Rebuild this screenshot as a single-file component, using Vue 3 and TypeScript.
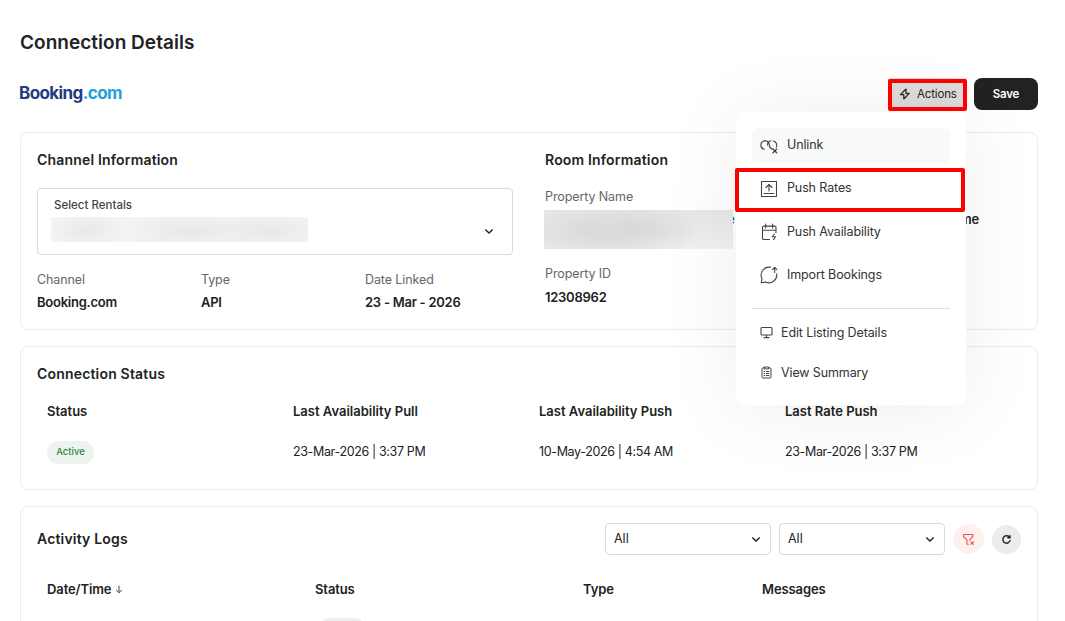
<script setup lang="ts">
interface StatusColumn {
  label: string
  value: string
  pill?: boolean
}

const channelFacts = [
  { label: 'Channel', value: 'Booking.com' },
  { label: 'Type', value: 'API' },
  { label: 'Date Linked', value: '23 - Mar - 2026' },
]

const statusColumns: StatusColumn[] = [
  { label: 'Status', value: 'Active', pill: true },
  { label: 'Last Availability Pull', value: '23-Mar-2026 | 3:37 PM' },
  { label: 'Last Availability Push', value: '10-May-2026 | 4:54 AM' },
  { label: 'Last Rate Push', value: '23-Mar-2026 | 3:37 PM' },
]
</script>

<template>
  <main class="page">
    <h1>Connection Details</h1>

    <header class="toolbar">
      <div class="logo">Booking<span>.com</span></div>
      <div class="buttons">
        <button class="actions">
          <svg width="12" height="14" viewBox="0 0 12 14" fill="none" stroke="#222" stroke-width="1.2" stroke-linejoin="round">
            <path d="M7 2 1.500 7.600h3.300v4.400l5.400-5.600H7z" />
          </svg>
          <span>Actions</span>
        </button>
        <button class="save">Save</button>
      </div>
    </header>

    <section class="card info">
      <div class="channel">
        <h2>Channel Information</h2>
        <div class="rental">
          <div>
            <div class="rental-label">Select Rentals</div>
            <div class="rental-value"></div>
          </div>
          <svg class="chev" width="10" height="7" viewBox="0 0 10 7"><path d="M1.3 1.4 5 5l3.7-3.6" /></svg>
        </div>
        <div class="facts">
          <div v-for="f in channelFacts" :key="f.label">
            <div class="label">{{ f.label }}</div>
            <div class="value">{{ f.value }}</div>
          </div>
        </div>
      </div>
      <div class="room">
        <h2>Room Information</h2>
        <div class="label name-label">Property Name</div>
        <div class="name-row">
          <div class="name-value"></div>
          <span class="link-tail">e</span>
          <span class="value room-tail">me</span>
        </div>
        <div class="label">Property ID</div>
        <div class="value id-value">12308962</div>
      </div>
    </section>

    <section class="card status">
      <h2>Connection Status</h2>
      <div class="status-grid">
        <div v-for="c in statusColumns" :key="c.label">
          <div class="th">{{ c.label }}</div>
          <div v-if="c.pill" class="pill">{{ c.value }}</div>
          <div v-else class="td">{{ c.value }}</div>
        </div>
      </div>
    </section>

    <section class="card logs">
      <div class="logs-head">
        <h2>Activity Logs</h2>
        <div class="filters">
          <div v-for="n in 2" :key="n" class="select">
            <span>All</span>
            <svg class="chev" width="10" height="7" viewBox="0 0 10 7"><path d="M1.3 1.4 5 5l3.7-3.6" /></svg>
          </div>
          <div class="round clear">
            <svg width="13" height="13" viewBox="0 0 13 13" fill="none" stroke="#f0524f" stroke-width="1.1" stroke-linejoin="round">
              <path d="M6.800 11.300H4.900V6.800L1.500 3.500V1.500h9.300v2L7.700 6.600v1.200M8.500 8.500l3.200 3.200M11.700 8.500l-3.200 3.200" />
            </svg>
          </div>
          <div class="round refresh">
            <svg width="11" height="11" viewBox="0 0 11 11" fill="none" stroke="#222" stroke-width="1.4">
              <path d="M8.3 3A3.7 3.7 0 1 0 9.2 6M9 1.300v2.500H6.300" />
            </svg>
          </div>
        </div>
      </div>
      <div class="logs-grid">
        <div class="th">
          Date/Time
          <svg width="8" height="9" viewBox="0 0 8 9" fill="none" stroke="#444" stroke-width="1"><path d="M4 .8v6.8M1.2 5 4 7.8 6.8 5" /></svg>
        </div>
        <div class="th">Status</div>
        <div class="th">Type</div>
        <div class="th">Messages</div>
      </div>
      <div class="next-pill"></div>
    </section>

    <nav class="menu">
      <div class="item hover">
        <svg width="18" height="18" viewBox="0 0 18 18" class="ico">
          <path d="M4.300 13.200A4.200 4.200 0 1 1 9.300 9c.1 2 1.200 3.700 3 4.100M7.600 9.200C7.300 6.900 8.800 5 11 4.800M13.200 5a4.200 4.200 0 0 1 3 6.200" />
          <path d="M13 13l3.700 3.700M16.700 13 13 16.700" stroke-width="1.3" />
        </svg>
        <span>Unlink</span>
      </div>
      <div class="item">
        <svg width="18" height="18" viewBox="0 0 18 18" class="ico">
          <path d="M1.500 1.500h15v15h-15zM4 13.500h10M9 11V4.800M6 7.500l3-3 3 3" />
        </svg>
        <span>Push Rates</span>
      </div>
      <div class="item">
        <svg width="18" height="18" viewBox="0 0 18 18" class="ico">
          <path d="M9.500 16.500H3.700c-.8 0-1.200-.5-1.200-1.200V4.300c0-.8.4-1.200 1.200-1.200h11.100c.8 0 1.200.4 1.200 1.200v5.200M2.500 7.200H16M5.700 1v4M12.600 1v4M14.200 11.200l-1.900 2.600h3.200l-1.900 2.800" />
        </svg>
        <span>Push Availability</span>
      </div>
      <div class="item">
        <svg width="18" height="18" viewBox="0 0 18 18" class="ico">
          <path d="M10.800 1.300A8 8 0 0 0 2 12.800L1.300 16.700l4.200-.6A8 8 0 0 0 16.700 7.700M14.700 6.400V1.600M12.500 3.700l2.200-2.200 2.200 2.200" />
        </svg>
        <span>Import Bookings</span>
      </div>
      <hr />
      <div class="item small">
        <svg width="13" height="13" viewBox="0 0 13 13" class="ico">
          <path d="M2 1.5h9c.6 0 1 .4 1 1V8c0 .6-.4 1-1 1H2c-.6 0-1-.4-1-1V2.500c0-.6.4-1 1-1zM6.500 9v2.500M4 11.600h5" />
        </svg>
        <span>Edit Listing Details</span>
      </div>
      <div class="item small">
        <svg width="13" height="13" viewBox="0 0 13 13" class="ico fine">
          <path d="M4.300 1.900H2.900c-.5 0-.9.4-.9.9v8.300c0 .5.4.9.9.9h7.200c.5 0 .9-.4.9-.9V2.800c0-.5-.4-.9-.9-.9H8.700M4.400 1h4.200v1.900H4.400zM4.100 5.500h.6M6.300 5.500h2.600M4.100 7.500h.6M6.300 7.500h2.600M4.100 9.500h.6M6.300 9.500h2.600" />
        </svg>
        <span>View Summary</span>
      </div>
    </nav>

    <div class="mark mark-actions"></div>
    <div class="mark mark-rates"></div>
  </main>
</template>

<style>
body {
  margin: 0;
  background: #fff;
  overflow: hidden;
}
</style>

<style scoped>
.page {
  position: relative;
  box-sizing: border-box;
  width: 1065px;
  height: 621px;
  overflow: hidden;
  padding: 31px 27px 0 20px;
  background: #fff;
  color: #222;
  font-family: Inter, "Liberation Sans", sans-serif;
  font-size: 13px;
  line-height: 20px;
}
h1 {
  margin: 0;
  font-size: 19px;
  font-weight: 600;
  line-height: 24px;
  letter-spacing: 0.03px;
}
h2 {
  margin: 0;
  font-size: 14px;
  font-weight: 600;
  line-height: 20px;
  letter-spacing: 0.18px;
}
.toolbar {
  display: flex;
  justify-content: space-between;
  height: 32px;
  margin: 23px 0 22px;
}
.logo {
  margin-left: -1px;
  color: #253b80;
  font-size: 17px;
  font-weight: 700;
  line-height: 30px;
  letter-spacing: -0.6px;
}
.logo span {
  color: #1f9fdb;
}
.buttons {
  display: flex;
  gap: 7px;
}
button {
  border: 0;
  padding: 0;
  font: 500 11.5px/32px Inter, sans-serif;
  color: #222;
}
.actions {
  display: flex;
  align-items: center;
  gap: 6px;
  width: 79px;
  padding: 0 0 0 11px;
  background: #dcdcdc;
  font-weight: 400;
  letter-spacing: -0.15px;
}
.save {
  width: 64px;
  border-radius: 8px;
  background: #222;
  color: #fff;
  font-weight: 600;
  letter-spacing: -0.2px;
}
.card {
  box-sizing: border-box;
  border: 1px solid #ebebeb;
  border-radius: 8px;
  padding: 17px 16px 0;
  margin-bottom: 16px;
}
.info {
  display: flex;
  gap: 32px;
  height: 198px;
}
.channel {
  width: 476px;
}
.rental {
  box-sizing: border-box;
  display: flex;
  justify-content: space-between;
  height: 67px;
  margin-top: 18px;
  padding: 6px 18px 0 13px;
  border: 1px solid #d9d9d9;
  border-radius: 4px;
}
.rental-label {
  padding-left: 3px;
  color: #444;
  font-size: 11.5px;
  font-weight: 500;
}
.rental-value {
  width: 257px;
  height: 25px;
  margin-top: 2px;
  background:
    radial-gradient(ellipse 40px 18px at 36px 13px, #e8e8e8, transparent),
    radial-gradient(ellipse 75px 20px at 140px 14px, #e8e8e8, transparent),
    radial-gradient(ellipse 55px 20px at 220px 14px, #e8e8e8, transparent),
    #f4f4f4;
}
.chev {
  fill: none;
  stroke: #222;
  stroke-width: 1.4;
}
.rental .chev {
  margin-top: 33px;
}
.facts {
  display: grid;
  grid-template-columns: repeat(3, 164px);
  margin-top: 14px;
}
.label {
  color: #666;
  font-size: 12.5px;
  line-height: 22px;
  letter-spacing: -0.1px;
}
.value {
  font-weight: 600;
  letter-spacing: -0.25px;
}
.facts .value {
  margin-top: 1px;
}
.name-label {
  margin-top: 16px;
}
.name-row {
  display: flex;
  height: 39px;
  margin: 2px 0 14px -1px;
  line-height: 18px;
}
.name-value {
  position: relative;
  width: 189px;
  background:
    radial-gradient(ellipse 60px 26px at 45px 21px, #dadada, transparent),
    radial-gradient(ellipse 65px 28px at 92px 19px, #d8d8d8, transparent),
    linear-gradient(165deg, #e6e6e6 30%, #e9e9e9 60%, #f3f3f3);
}
.link-tail {
  width: 233px;
  color: #234a78;
  font-weight: 600;
  margin-left: -6px;
}
.id-value {
  margin-top: 2px;
}
.status {
  height: 144px;
}
.status-grid {
  display: grid;
  grid-template-columns: repeat(4, 246px);
  padding: 17px 0 0 10px;
}
.th {
  font-weight: 600;
}
.td {
  margin-top: 20px;
  font-size: 12.5px;
  line-height: 22px;
  letter-spacing: -0.36px;
}
.pill {
  width: 47px;
  height: 23px;
  margin-top: 20px;
  border-radius: 12px;
  background: #edf3ef;
  color: #2e8540;
  font-size: 9.5px;
  font-weight: 500;
  line-height: 22px;
  text-align: center;
}
.logs {
  height: 150px;
  padding-top: 16px;
}
.logs-head {
  display: flex;
  justify-content: space-between;
  align-items: center;
  height: 32px;
}
.filters {
  display: flex;
  align-items: center;
}
.select {
  box-sizing: border-box;
  display: flex;
  align-items: center;
  justify-content: space-between;
  width: 166px;
  height: 32px;
  margin-right: 8px;
  padding: 0 9px 0 8px;
  border: 1px solid #d9d9d9;
  border-radius: 4px;
  font-size: 12.5px;
}
.select .chev {
  margin-top: 1px;
}
.round {
  display: grid;
  place-items: center;
  border-radius: 50%;
}
.clear {
  width: 31px;
  height: 30px;
  margin-right: 8px;
  background: #fff0f0;
}
.refresh {
  width: 29px;
  height: 29px;
  margin-top: 1px;
  background: #ececec;
}
.logs-grid {
  display: grid;
  grid-template-columns: 268px 268px 179px 1fr;
  padding: 24px 0 0 10px;
}
.logs-grid .th {
  letter-spacing: -0.1px;
}
.next-pill {
  width: 47px;
  height: 23px;
  margin: 19px 0 0 282px;
  border-radius: 12px;
  background: #edf0ef;
}
.menu {
  position: absolute;
  left: 736px;
  top: 112px;
  box-sizing: border-box;
  width: 230px;
  height: 293px;
  padding: 16px 16px 0;
  border-radius: 8px;
  background: #fff;
  box-shadow: 0 4px 80px rgba(0, 0, 0, 0.07);
}
.item {
  display: flex;
  align-items: center;
  gap: 9px;
  height: 34.500px;
  margin-bottom: 8.900px;
  padding-left: 8px;
  border-radius: 6px;
  color: #333;
  font-size: 12.5px;
  letter-spacing: -0.12px;
}
.item span {
  margin-top: -1px;
}
.hover {
  background: #f8f9fb;
}
.ico {
  fill: none;
  stroke: #444;
  stroke-width: 1.1;
  stroke-linejoin: round;
  stroke-linecap: round;
}
.fine {
  stroke-width: 1;
}
hr {
  margin: 15px 0 7px;
  border: 0;
  border-top: 1px solid #e2e2e2;
}
.small {
  gap: 8px;
  margin-bottom: 5.500px;
}
.small span {
  margin-top: 0;
}
.mark {
  position: absolute;
  box-sizing: border-box;
  border: 4px solid #fe0000;
  border-radius: 2px;
}
.mark-actions {
  left: 888px;
  top: 79px;
  width: 79px;
  height: 32px;
}
.mark-rates {
  left: 735px;
  top: 168px;
  width: 230px;
  height: 44px;
}
</style>
